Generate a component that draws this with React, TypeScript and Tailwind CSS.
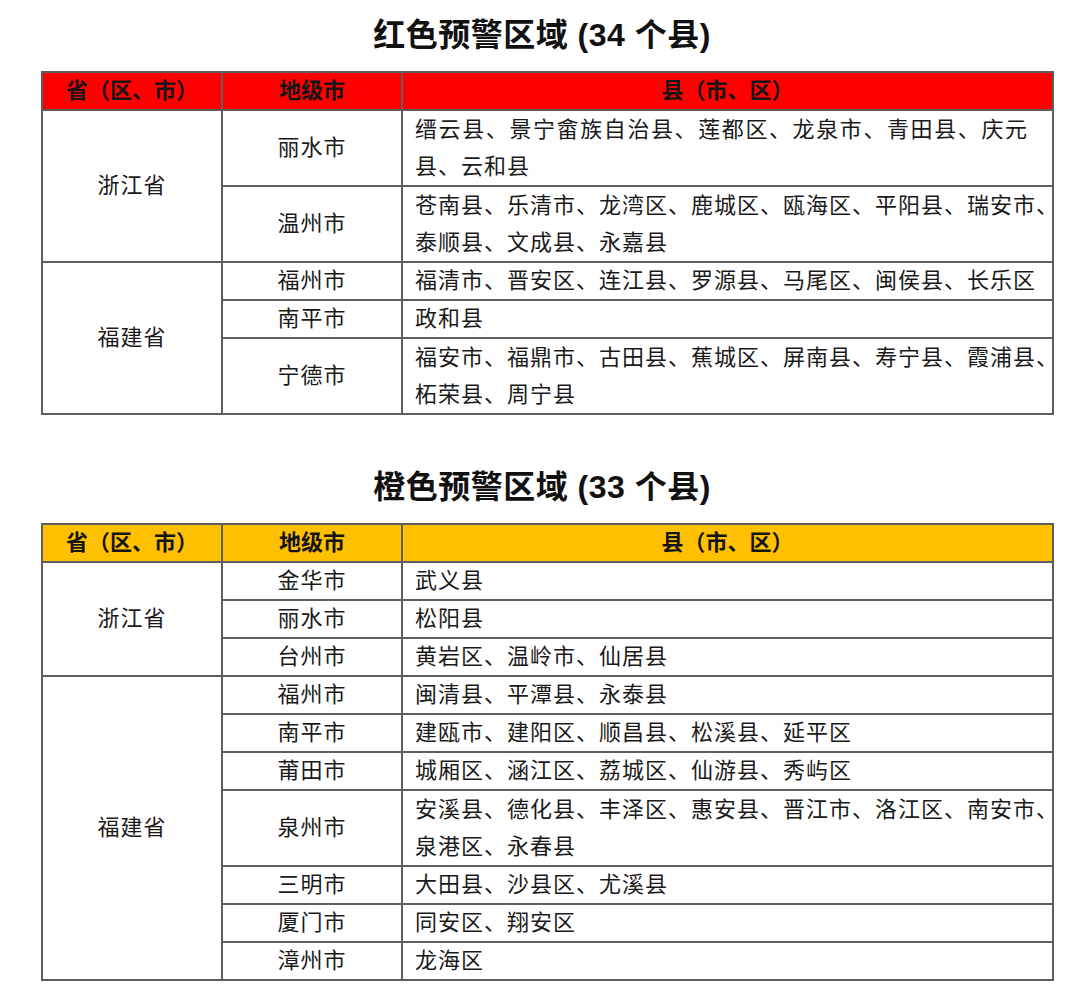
type Row = { city: string; lines: string[]; wide?: boolean };
type Group = { province: string; rows: Row[] };

const red: Group[] = [
  {
    province: "浙江省",
    rows: [
      { city: "丽水市", lines: ["缙云县、景宁畲族自治县、莲都区、龙泉市、青田县、庆元", "县、云和县"], wide: true },
      { city: "温州市", lines: ["苍南县、乐清市、龙湾区、鹿城区、瓯海区、平阳县、瑞安市、", "泰顺县、文成县、永嘉县"] },
    ],
  },
  {
    province: "福建省",
    rows: [
      { city: "福州市", lines: ["福清市、晋安区、连江县、罗源县、马尾区、闽侯县、长乐区"] },
      { city: "南平市", lines: ["政和县"] },
      { city: "宁德市", lines: ["福安市、福鼎市、古田县、蕉城区、屏南县、寿宁县、霞浦县、", "柘荣县、周宁县"] },
    ],
  },
];

const orange: Group[] = [
  {
    province: "浙江省",
    rows: [
      { city: "金华市", lines: ["武义县"] },
      { city: "丽水市", lines: ["松阳县"] },
      { city: "台州市", lines: ["黄岩区、温岭市、仙居县"] },
    ],
  },
  {
    province: "福建省",
    rows: [
      { city: "福州市", lines: ["闽清县、平潭县、永泰县"] },
      { city: "南平市", lines: ["建瓯市、建阳区、顺昌县、松溪县、延平区"] },
      { city: "莆田市", lines: ["城厢区、涵江区、荔城区、仙游县、秀屿区"] },
      { city: "泉州市", lines: ["安溪县、德化县、丰泽区、惠安县、晋江市、洛江区、南安市、", "泉港区、永春县"] },
      { city: "三明市", lines: ["大田县、沙县区、尤溪县"] },
      { city: "厦门市", lines: ["同安区、翔安区"] },
      { city: "漳州市", lines: ["龙海区"] },
    ],
  },
];

const cell = "border-2 border-[#5e5e5e] leading-[36px] align-middle";

function WarnTable({ title, headBg, groups }: { title: string; headBg: string; groups: Group[] }) {
  return (
    <div className="flex flex-col">
      <h2 className="pl-[4px] text-center text-[32px] leading-[40px] font-bold text-[#111] tracking-[0.5px]">{title}</h2>
      <table className="mt-4 ml-[41px] w-[1013px] border-collapse table-fixed text-[22px] text-[#1a1a1a]">
        <colgroup>
          <col className="w-[180px]" />
          <col className="w-[180px]" />
          <col />
        </colgroup>
        <thead>
          <tr className={headBg}>
            <th className={`${cell} font-bold text-[#151515]`}>省（区、市）</th>
            <th className={`${cell} font-bold text-[#151515]`}>地级市</th>
            <th className={`${cell} font-bold text-[#151515]`}>县（市、区）</th>
          </tr>
        </thead>
        <tbody>
          {groups.map((g) =>
            g.rows.map((r, i) => (
              <tr key={g.province + r.city}>
                {i === 0 && (
                  <td rowSpan={g.rows.length} className={`${cell} text-center tracking-[1px]`}>
                    {g.province}
                  </td>
                )}
                <td className={`${cell} text-center tracking-[1px]`}>{r.city}</td>
                <td className={`${cell} pl-[12px] tracking-[1px]`}>
                  {r.lines.map((l, j) => (
                    <div
                      key={l}
                      className={`whitespace-nowrap ${r.lines.length > 1 ? "leading-[37px]" : ""} ${
                        r.wide && j === 0 ? "tracking-[1.6px]" : ""
                      }`}
                    >
                      {l}
                    </div>
                  ))}
                </td>
              </tr>
            ))
          )}
        </tbody>
      </table>
    </div>
  );
}

export default function App() {
  return (
    <div
      className="w-[1080px] h-[996px] bg-white pt-[15px] overflow-hidden"
      style={{ fontFamily: '"Liberation Sans", "Noto Sans CJK SC", sans-serif' }}
    >
      <WarnTable title="红色预警区域 (34 个县)" headBg="bg-[#ff0000]" groups={red} />
      <div className="mt-[52px]">
        <WarnTable title="橙色预警区域 (33 个县)" headBg="bg-[#ffc000]" groups={orange} />
      </div>
    </div>
  );
}
